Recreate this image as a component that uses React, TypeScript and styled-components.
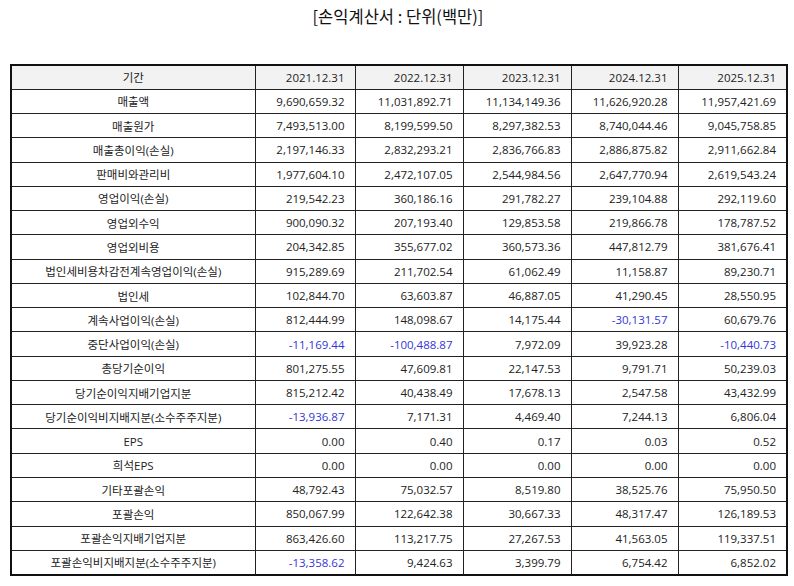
import styled, { createGlobalStyle } from 'styled-components';

const GlobalStyle = createGlobalStyle`
  html, body {
    margin: 0;
    padding: 0;
    background: #fff;
  }
  body {
    font-family: "Open Sans", "Noto Sans CJK KR", sans-serif;
    color: #222;
  }
`;

const years = ['2021.12.31', '2022.12.31', '2023.12.31', '2024.12.31', '2025.12.31'];
const colWidths = [244, 100, 108, 108, 107, 109];

const rows: [string, string[]][] = [
    ['매출액', ['9,690,659.32', '11,031,892.71', '11,134,149.36', '11,626,920.28', '11,957,421.69']],
    ['매출원가', ['7,493,513.00', '8,199,599.50', '8,297,382.53', '8,740,044.46', '9,045,758.85']],
    ['매출총이익(손실)', ['2,197,146.33', '2,832,293.21', '2,836,766.83', '2,886,875.82', '2,911,662.84']],
    ['판매비와관리비', ['1,977,604.10', '2,472,107.05', '2,544,984.56', '2,647,770.94', '2,619,543.24']],
    ['영업이익(손실)', ['219,542.23', '360,186.16', '291,782.27', '239,104.88', '292,119.60']],
    ['영업외수익', ['900,090.32', '207,193.40', '129,853.58', '219,866.78', '178,787.52']],
    ['영업외비용', ['204,342.85', '355,677.02', '360,573.36', '447,812.79', '381,676.41']],
    ['법인세비용차감전계속영업이익(손실)', ['915,289.69', '211,702.54', '61,062.49', '11,158.87', '89,230.71']],
    ['법인세', ['102,844.70', '63,603.87', '46,887.05', '41,290.45', '28,550.95']],
    ['계속사업이익(손실)', ['812,444.99', '148,098.67', '14,175.44', '-30,131.57', '60,679.76']],
    ['중단사업이익(손실)', ['-11,169.44', '-100,488.87', '7,972.09', '39,923.28', '-10,440.73']],
    ['총당기순이익', ['801,275.55', '47,609.81', '22,147.53', '9,791.71', '50,239.03']],
    ['당기순이익지배기업지분', ['815,212.42', '40,438.49', '17,678.13', '2,547.58', '43,432.99']],
    ['당기순이익비지배지분(소수주주지분)', ['-13,936.87', '7,171.31', '4,469.40', '7,244.13', '6,806.04']],
    ['EPS', ['0.00', '0.40', '0.17', '0.03', '0.52']],
    ['희석EPS', ['0.00', '0.00', '0.00', '0.00', '0.00']],
    ['기타포괄손익', ['48,792.43', '75,032.57', '8,519.80', '38,525.76', '75,950.50']],
    ['포괄손익', ['850,067.99', '122,642.38', '30,667.33', '48,317.47', '126,189.53']],
    ['포괄손익지배기업지분', ['863,426.60', '113,217.75', '27,267.53', '41,563.05', '119,337.51']],
    ['포괄손익비지배지분(소수주주지분)', ['-13,358.62', '9,424.63', '3,399.79', '6,754.42', '6,852.02']],
];

function App() {
    return <Page>
        <GlobalStyle />
        <Title>[손익계산서 : 단위(백만)]</Title>
        <Table>
            <colgroup>
                {colWidths.map((w, i) => <col key={i} style={{ width: w }} />)}
            </colgroup>
            <thead>
                <tr>
                    <HeadCell $align="center">기간</HeadCell>
                    {years.map(y => <HeadCell key={y} $align="right">{y}</HeadCell>)}
                </tr>
            </thead>
            <tbody>
                {rows.map(([label, values]) => <tr key={label}>
                    <LabelCell>{label}</LabelCell>
                    {values.map((v, i) => <ValueCell key={i} $negative={v.startsWith('-')}>{v}</ValueCell>)}
                </tr>)}
            </tbody>
        </Table>
    </Page>
}

const Page = styled.div`
  width: 794px;
  padding: 0 8px 0 10px;
  box-sizing: border-box;
`

const Title = styled.div`
  font-family: "Noto Sans CJK KR", sans-serif;
  font-size: 16.5px;
  text-align: center;
  color: #111;
  height: 64px;
  line-height: 32px;
`

const Table = styled.table`
  width: 776px;
  table-layout: fixed;
  border-collapse: collapse;
  border: 2px solid #111;
  font-size: 11.5px;

  tr {
    height: 24.28px;
  }
`

const HeadCell = styled.th<{ $align: string }>`
  background: #f2f2f2;
  font-weight: normal;
  border: 1px solid #222;
  text-align: ${p => p.$align};
  padding: 0 10px;
  color: #222;
`

const LabelCell = styled.td`
  border: 1px solid #222;
  text-align: center;
  padding: 0 6px;
  white-space: nowrap;
`

const ValueCell = styled.td<{ $negative: boolean }>`
  border: 1px solid #222;
  text-align: right;
  padding: 0 10px;
  white-space: nowrap;
  color: ${p => p.$negative ? '#3535d8' : '#222'};
`

export default App;
